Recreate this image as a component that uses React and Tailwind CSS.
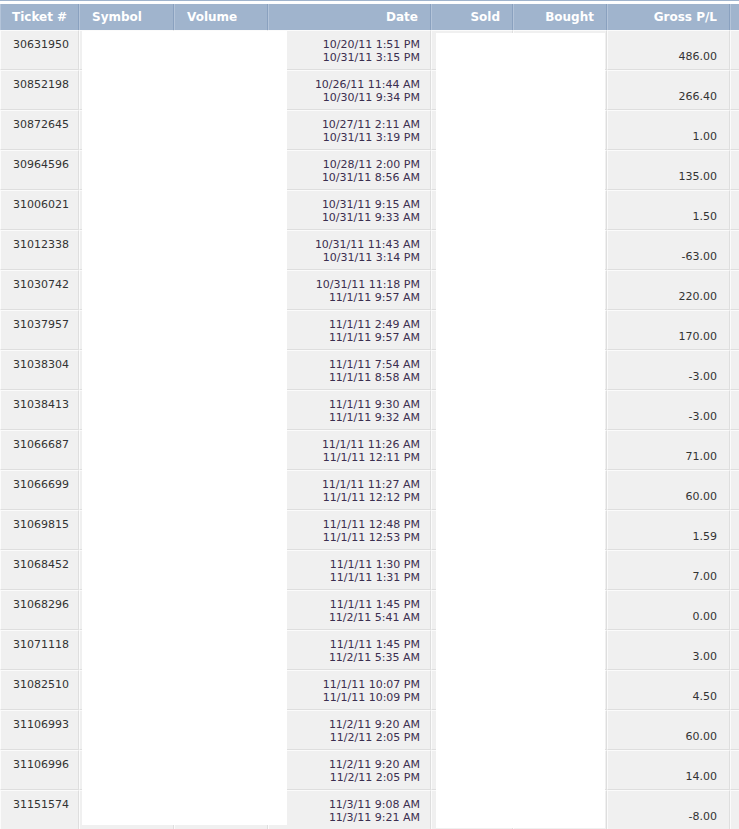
import React from 'react';

const trades = [
    ['30631950', '10/20/11 1:51 PM', '10/31/11 3:15 PM', '486.00'],
    ['30852198', '10/26/11 11:44 AM', '10/30/11 9:34 PM', '266.40'],
    ['30872645', '10/27/11 2:11 AM', '10/31/11 3:19 PM', '1.00'],
    ['30964596', '10/28/11 2:00 PM', '10/31/11 8:56 AM', '135.00'],
    ['31006021', '10/31/11 9:15 AM', '10/31/11 9:33 AM', '1.50'],
    ['31012338', '10/31/11 11:43 AM', '10/31/11 3:14 PM', '-63.00'],
    ['31030742', '10/31/11 11:18 PM', '11/1/11 9:57 AM', '220.00'],
    ['31037957', '11/1/11 2:49 AM', '11/1/11 9:57 AM', '170.00'],
    ['31038304', '11/1/11 7:54 AM', '11/1/11 8:58 AM', '-3.00'],
    ['31038413', '11/1/11 9:30 AM', '11/1/11 9:32 AM', '-3.00'],
    ['31066687', '11/1/11 11:26 AM', '11/1/11 12:11 PM', '71.00'],
    ['31066699', '11/1/11 11:27 AM', '11/1/11 12:12 PM', '60.00'],
    ['31069815', '11/1/11 12:48 PM', '11/1/11 12:53 PM', '1.59'],
    ['31068452', '11/1/11 1:30 PM', '11/1/11 1:31 PM', '7.00'],
    ['31068296', '11/1/11 1:45 PM', '11/2/11 5:41 AM', '0.00'],
    ['31071118', '11/1/11 1:45 PM', '11/2/11 5:35 AM', '3.00'],
    ['31082510', '11/1/11 10:07 PM', '11/1/11 10:09 PM', '4.50'],
    ['31106993', '11/2/11 9:20 AM', '11/2/11 2:05 PM', '60.00'],
    ['31106996', '11/2/11 9:20 AM', '11/2/11 2:05 PM', '14.00'],
    ['31151574', '11/3/11 9:08 AM', '11/3/11 9:21 AM', '-8.00'],
];

const th = "h-[26px] px-3 bg-[#a0b4cd] text-white font-bold text-[12px] leading-[14px] whitespace-nowrap border-l border-l-[#b4c4d9] border-r border-r-[#8aa1bf]";
const td = "h-[40px] bg-[#f0f0f0] border-t border-t-[#fbfbfb] border-l border-l-[#fbfbfb] border-b border-b-[#dedede] border-r border-r-[#dedede] text-[11px] leading-[13px] whitespace-nowrap";

export default function App() {
    return (
        <div className="w-[739px] h-[829px] overflow-hidden bg-white font-['DejaVu_Sans',Verdana,sans-serif]">
            <div className="relative border-t border-t-[#a0b4cd] pt-[3px]">
                <table className="table-fixed border-separate border-spacing-0 w-[760px]">
                    <colgroup>
                        <col className="w-[79px]" />
                        <col className="w-[95px]" />
                        <col className="w-[94px]" />
                        <col className="w-[163px]" />
                        <col className="w-[82px]" />
                        <col className="w-[94px]" />
                        <col className="w-[123px]" />
                        <col className="w-[30px]" />
                    </colgroup>
                    <thead>
                        <tr>
                            <th className={th + " text-left pl-[11px] pr-0"}>Ticket #</th>
                            <th className={th + " text-left"}>Symbol</th>
                            <th className={th + " text-left"}>Volume</th>
                            <th className={th + " text-right"}>Date</th>
                            <th className={th + " text-right"}>Sold</th>
                            <th className={th + " text-right"}>Bought</th>
                            <th className={th + " text-right"}>Gross P/L</th>
                            <th className={th}></th>
                        </tr>
                    </thead>
                    <tbody>
                        {trades.map(t => (
                            <tr key={t[0]}>
                                <td className={td + " align-top pt-[7px] pl-3 text-[#333]"}>{t[0]}</td>
                                <td className={td}></td>
                                <td className={td}></td>
                                <td className={td + " align-top pt-[7px] pr-[10px] text-right text-[#3b2e4f]"}>
                                    {t[1]}<br />{t[2]}
                                </td>
                                <td className={td}></td>
                                <td className={td}></td>
                                <td className={td + " align-bottom pb-[6px] pr-3 text-right text-[#333]"}>{t[3]}</td>
                                <td className={td}></td>
                            </tr>
                        ))}
                    </tbody>
                </table>

                {/* redaction boxes */}
                <div className="absolute left-[82px] top-[30px] w-[205px] h-[794px] bg-white"></div>
                <div className="absolute left-[436px] top-[32px] w-[169px] h-[795px] bg-white"></div>
            </div>
        </div>
    );
}
